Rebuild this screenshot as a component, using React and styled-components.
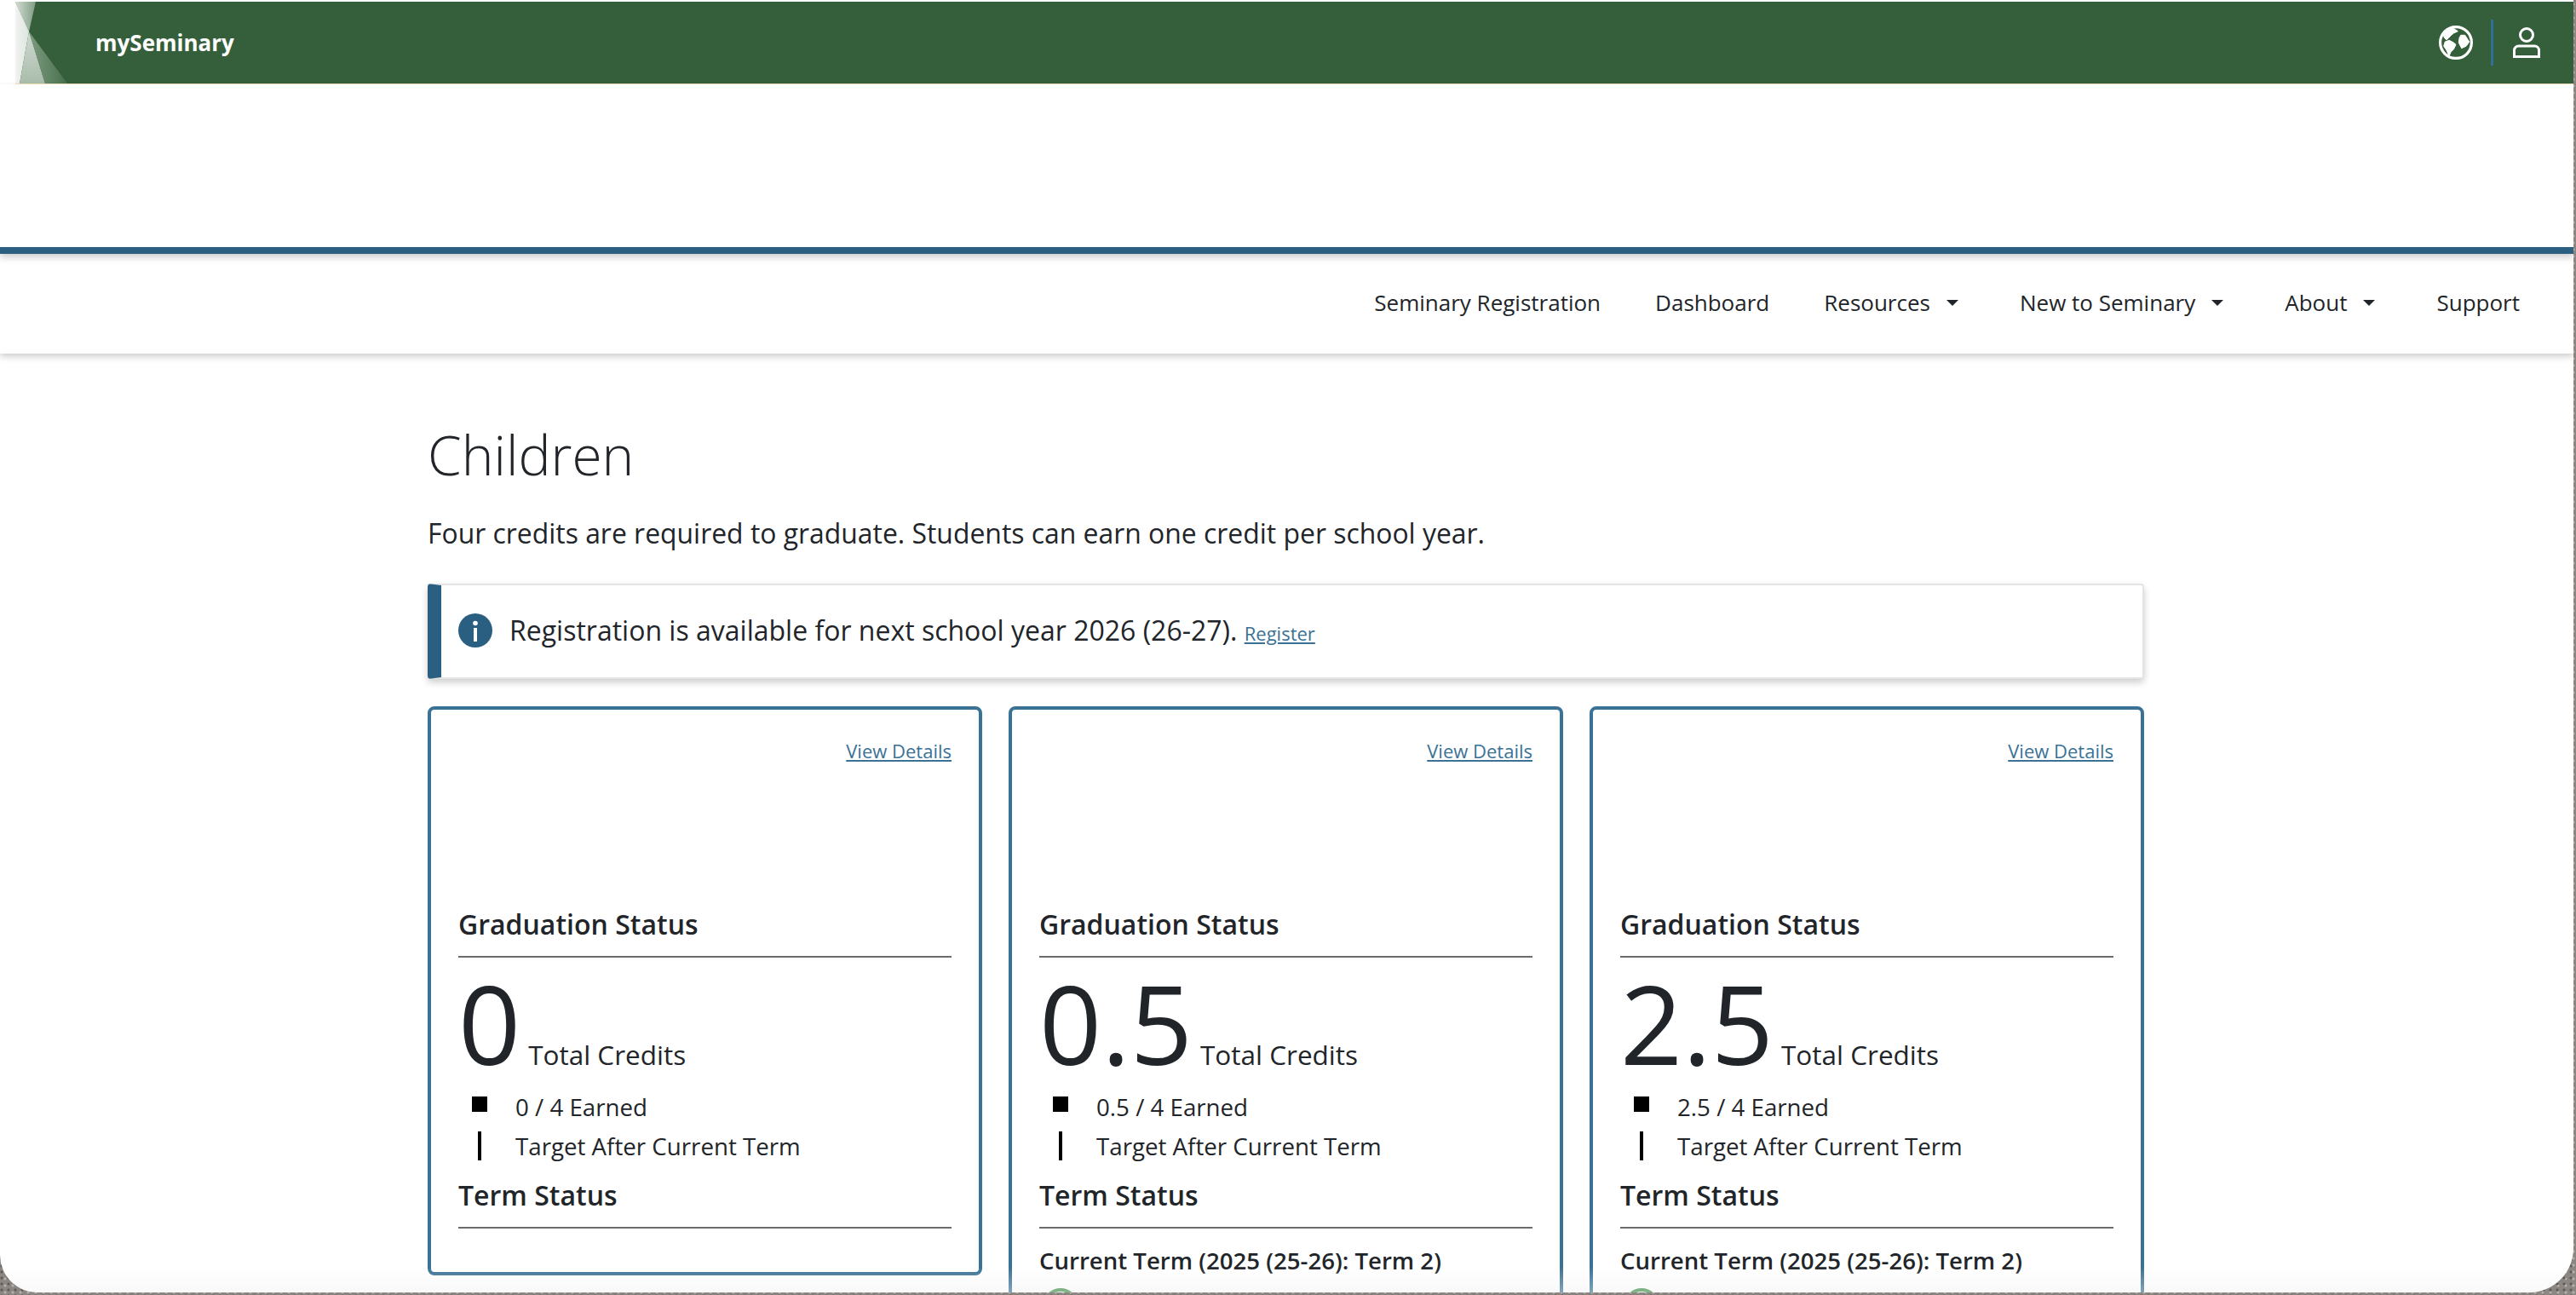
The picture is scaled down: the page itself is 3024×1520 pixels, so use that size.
import styled, { createGlobalStyle } from "styled-components";

const GlobalStyle = createGlobalStyle`
  html, body {
    margin: 0;
    height: 100%;
    overflow: hidden;
    background-color: #8b8681;
    background-image:
      radial-gradient(circle at 2px 2px, #5f5a56 1px, transparent 2px),
      radial-gradient(circle at 6px 5px, #b5b0aa 1px, transparent 2px);
    background-size: 8px 7px, 9px 8px;
    font-family: "Open Sans", "Liberation Sans", sans-serif;
    color: #212529;
  }
`;

const Screen = styled.div`
  position: relative;
  box-sizing: border-box;
  width: 3021px;
  height: 1517px;
  padding-top: 2px;
  background: #fff;
  border-radius: 0 0 52px 44px;
  overflow: hidden;
`;

const BottomFade = styled.div`
  position: absolute;
  left: 0;
  right: 0;
  bottom: 0;
  height: 30px;
  background: linear-gradient(to bottom, rgba(240, 240, 240, 0), rgba(240, 240, 240, 0.4));
  pointer-events: none;
`;

const TopBar = styled.header`
  position: relative;
  display: flex;
  align-items: center;
  justify-content: space-between;
  height: 96px;
  margin-left: 18px;
  padding: 0 39px 0 94px;
  background: #355e3b;
  border-bottom: 1px solid #f6e2b8;
  color: #fff;
`;

const Facets = styled.svg`
  position: absolute;
  left: 0;
  top: 0;
  width: 64px;
  height: 96px;
`;

const Brand = styled.div`
  font-size: 26px;
  font-weight: 700;
`;

const TopIcons = styled.div`
  display: flex;
  align-items: center;
`;

const GlobeButton = styled.div`
  display: flex;
  padding-right: 21px;
`;

const ProfileButton = styled.div`
  display: flex;
  height: 54px;
  align-items: center;
  padding-left: 23px;
  border-left: 3px solid #2f7199;
`;

const Banner = styled.div`
  position: relative;
  height: 191px;
  border-bottom: 8px solid #2a5f82;
  box-shadow: 0 4px 8px rgba(0, 0, 0, 0.2);
`;

const NavBar = styled.nav`
  display: flex;
  justify-content: flex-end;
  align-items: center;
  box-sizing: border-box;
  height: 117px;
  padding: 0 31px 3px 0;
  box-shadow: 0 3px 8px rgba(0, 0, 0, 0.22);
`;

const NavItem = styled.a`
  display: flex;
  align-items: center;
  padding: 0 32px;
  font-size: 26px;
  color: #212529;
`;

const Caret = styled.span`
  width: 0;
  height: 0;
  margin: 0 8px 0 19px;
  border-top: 7px solid #212529;
  border-left: 7px solid transparent;
  border-right: 7px solid transparent;
`;

const Main = styled.main`
  width: 2015px;
  margin-left: 502px;
`;

const PageTitle = styled.h1`
  margin: 80px 0 0;
  font-size: 64px;
  font-weight: 300;
  line-height: 77px;
`;

const Intro = styled.p`
  margin: 30px 0 0;
  font-size: 31.9px;
  line-height: 48px;
`;

const Alert = styled.div`
  display: flex;
  align-items: center;
  gap: 20px;
  box-sizing: border-box;
  height: 112px;
  margin-top: 35px;
  padding: 0 0 3px 20px;
  background: #fff;
  border: 2px solid #e4e4e4;
  border-left: 16px solid #2a5f82;
  border-radius: 4px;
  box-shadow: 0 4px 8px rgba(0, 0, 0, 0.2);
  font-size: 32px;
`;

const SmallLink = styled.a`
  font-size: 22px;
  color: #3a7295;
  text-decoration: underline;
`;

const CardGrid = styled.div`
  display: grid;
  grid-template-columns: repeat(3, 651px);
  justify-content: space-between;
  align-items: start;
  margin-top: 32px;
`;

const Card = styled.section`
  box-sizing: border-box;
  height: ${(props) => props.$height}px;
  padding: 32px;
  border: 4px solid #3a7295;
  border-radius: 8px;
`;

const CardTop = styled.div`
  display: flex;
  justify-content: flex-end;
  height: 196px;
  line-height: 32px;
`;

const SectionTitle = styled.h2`
  margin: 0;
  padding-bottom: 13px;
  border-bottom: 2px solid #6c6c6c;
  font-size: 32px;
  font-weight: 600;
  line-height: 48px;
`;

const Credits = styled.div`
  display: flex;
  align-items: baseline;
  gap: 9px;
  margin-top: 2px;
  font-size: 31.5px;
`;

const CreditsValue = styled.span`
  font-size: 128px;
  line-height: 150px;
`;

const Legend = styled.ul`
  margin: 0;
  padding: 0 0 0 16px;
  list-style: none;
  font-size: 27.7px;
`;

const LegendRow = styled.li`
  display: flex;
  align-items: center;
  height: 46px;
`;

const LegendMark = styled.span`
  display: flex;
  justify-content: center;
  flex: none;
  width: 18px;
  margin-right: 33px;
`;

const EarnedMark = styled.span`
  width: 18px;
  height: 18px;
  margin-top: -6px;
  background: #000;
`;

const TargetMark = styled.span`
  width: 4px;
  height: 34px;
  background: #000;
`;

const TermTitle = styled(SectionTitle)`
  margin-top: 11px;
`;

const CurrentTerm = styled.div`
  margin-top: 17px;
  font-size: 27.6px;
  font-weight: 600;
  line-height: 40px;
`;

const TermDot = styled.span`
  display: block;
  width: 34px;
  height: 34px;
  margin: 13px 0 0 4px;
  border: 4px solid #3f8f47;
  border-radius: 50%;
`;

const children = [
  { value: "0", height: 668, current: false },
  { value: "0.5", height: 900, current: true },
  { value: "2.5", height: 900, current: true },
];

const navItems = [
  { label: "Seminary Registration" },
  { label: "Dashboard" },
  { label: "Resources", menu: true },
  { label: "New to Seminary", menu: true },
  { label: "About", menu: true },
  { label: "Support" },
];

const GlobeIcon = () => (
  <svg width="40" height="40" viewBox="0 0 40 40">
    <circle cx="20" cy="20" r="18.4" fill="none" stroke="#fff" strokeWidth="3.2" />
    <g fill="#fff" stroke="#fff" strokeWidth="1" strokeLinejoin="round">
      <path d="M4.7 10 11.3 4.7 17.3 3.3 22.3 6.7 17.3 9 14.7 11.3 11.3 14.7 9 16.7 6.7 14.7z" />
      <path d="M7.3 19 12.3 17.3 17.3 20 20 22.3 17.3 28 14 31 12 36 9 29 5.7 24z" />
      <path d="M25.7 11.3 30.7 11.3 35.7 19 32.3 24 26.7 26.7 23.3 20 24 14.7z" />
    </g>
  </svg>
);

const InfoIcon = () => (
  <svg width="40" height="40" viewBox="0 0 40 40">
    <circle cx="20" cy="20" r="20" fill="#2a5f82" />
    <circle cx="20" cy="11.5" r="2.8" fill="#fff" />
    <rect x="18" y="17" width="4" height="16" fill="#fff" />
  </svg>
);

const StudentCard = ({ value, height, current }) => (
  <Card $height={height}>
    <CardTop>
      <SmallLink href="#">View Details</SmallLink>
    </CardTop>
    <SectionTitle>Graduation Status</SectionTitle>
    <Credits>
      <CreditsValue>{value}</CreditsValue>
      <span>Total Credits</span>
    </Credits>
    <Legend>
      <LegendRow>
        <LegendMark>
          <EarnedMark />
        </LegendMark>
        {value} / 4 Earned
      </LegendRow>
      <LegendRow>
        <LegendMark>
          <TargetMark />
        </LegendMark>
        Target After Current Term
      </LegendRow>
    </Legend>
    <TermTitle>Term Status</TermTitle>
    {current && (
      <>
        <CurrentTerm>Current Term (2025 (25-26): Term 2)</CurrentTerm>
        <TermDot />
      </>
    )}
  </Card>
);

export default function App() {
  return (
    <>
      <GlobalStyle />
      <Screen>
        <TopBar>
          <Facets viewBox="0 0 64 96">
            <defs>
              <linearGradient id="facetTop" x1="0" y1="0" x2="1" y2="0">
                <stop offset="0" stopColor="#d3ddd4" />
                <stop offset="1" stopColor="#7f9c82" />
              </linearGradient>
              <linearGradient id="facetLeft" x1="0" y1="0" x2="1" y2="0">
                <stop offset="0" stopColor="#f2f3f2" />
                <stop offset="1" stopColor="#dde5de" />
              </linearGradient>
              <linearGradient id="facetLight" x1="0" y1="0" x2="0" y2="1">
                <stop offset="0" stopColor="#cfd9d0" />
                <stop offset="1" stopColor="#a9bdab" />
              </linearGradient>
              <linearGradient id="facetMid" x1="0" y1="0" x2="1" y2="0">
                <stop offset="0" stopColor="#7d9b80" />
                <stop offset="1" stopColor="#47704d" />
              </linearGradient>
            </defs>
            <polygon points="0,0 24,0 16,35" fill="url(#facetTop)" />
            <polygon points="0,0 16,35 5,96 0,96" fill="url(#facetLeft)" />
            <polygon points="16,35 5,96 35,96" fill="url(#facetLight)" />
            <polygon points="16,35 35,96 61,96" fill="url(#facetMid)" />
          </Facets>
          <Brand>mySeminary</Brand>
          <TopIcons>
            <GlobeButton>
              <GlobeIcon />
            </GlobeButton>
            <ProfileButton>
              <svg width="32" height="36" viewBox="0 0 32 36" fill="none" stroke="#fff" strokeWidth="3">
                <circle cx="16" cy="9" r="7.5" />
                <path d="M1.5 34.5V27a5 5 0 0 1 5-5h19a5 5 0 0 1 5 5v7.5z" />
              </svg>
            </ProfileButton>
          </TopIcons>
        </TopBar>
        <Banner />
        <NavBar>
          {navItems.map((item) => (
            <NavItem key={item.label}>
              {item.label}
              {item.menu && <Caret />}
            </NavItem>
          ))}
        </NavBar>
        <Main>
          <PageTitle>Children</PageTitle>
          <Intro>Four credits are required to graduate. Students can earn one credit per school year.</Intro>
          <Alert>
            <InfoIcon />
            <span>
              Registration is available for next school year 2026 (26-27). <SmallLink href="#">Register</SmallLink>
            </span>
          </Alert>
          <CardGrid>
            {children.map((child) => (
              <StudentCard key={child.value} {...child} />
            ))}
          </CardGrid>
        </Main>
        <BottomFade />
      </Screen>
    </>
  );
}
